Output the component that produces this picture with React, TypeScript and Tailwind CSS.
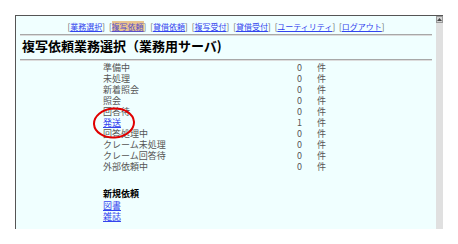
import React from 'react';

const navItems = ['業務選択', '複写依頼', '貸借依頼', '複写受付', '貸借受付', 'ユーティリティ', 'ログアウト'];

const rows = [
  { label: '準備中', count: 0 },
  { label: '未処理', count: 0 },
  { label: '新着照会', count: 0 },
  { label: '照会', count: 0 },
  { label: '回答待', count: 0 },
  { label: '発送', count: 1, link: true },
  { label: '回答処理中', count: 0 },
  { label: 'クレーム未処理', count: 0 },
  { label: 'クレーム回答待', count: 0 },
  { label: '外部依頼中', count: 0 },
];

export default function App() {
  return (
    <div
      className="w-[458px] h-[244px] bg-white pt-[15px] pl-[15px]"
      style={{ fontFamily: '"Noto Sans CJK JP", "Noto Sans", sans-serif' }}
    >
      <div className="relative flex w-[428px] h-[214px] border-l border-t border-[#555]">
        <div className="flex-1 bg-[#f0ffff]">
          {/* nav */}
          <div className="flex justify-center gap-[4px] pt-[5px] text-[8px] leading-[11px]">
            {navItems.map((item, i) => (
              <span key={item} className="text-[#666]">
                [
                <span
                  className={
                    i === 1
                      ? 'bg-[#e9c48f] text-[#5a50c8] underline'
                      : 'text-[#3344ee] underline'
                  }
                >
                  {item}
                </span>
                ]
              </span>
            ))}
          </div>
          <div className="mx-[4px] mt-[2px] h-[2px] border-t border-[#a8a8a8] border-b border-b-[#dcdcdc]" />
          <h1 className="pl-[6px] text-[13px] leading-[20px] font-bold text-black">
            複写依頼業務選択（業務用サーバ)
          </h1>
          <div className="mx-[4px] mt-[3px] h-[2px] border-t border-[#a8a8a8] border-b border-b-[#dcdcdc]" />

          <div className="mt-[1px] pl-[87px] text-[9px] leading-[11px] text-[#555]">
            {rows.map((r) => (
              <div key={r.label} className="flex">
                <span className="w-[194px]">
                  {r.link ? <span className="text-[#3344ee] underline">{r.label}</span> : r.label}
                </span>
                <span className="w-[20px]">{r.count}</span>
                <span>件</span>
              </div>
            ))}
          </div>

          <div className="mt-[16px] pl-[87px] text-[9px] leading-[11.5px]">
            <div className="font-bold text-black">新規依頼</div>
            <div className="text-[#3344ee] underline">図書</div>
            <div className="text-[#3344ee] underline">雑誌</div>
          </div>
        </div>

        {/* scrollbar */}
        <div className="w-[7px] bg-[#e0e0e0] flex flex-col">
          <div className="h-[7px] bg-[#d4d4d4] border border-[#999] flex items-center justify-center">
            <svg width="5" height="3" viewBox="0 0 5 3">
              <path d="M2.5 0 L5 3 L0 3 Z" fill="#444" />
            </svg>
          </div>
        </div>

        {/* annotation */}
        <svg
          className="absolute left-[75px] top-[91px]"
          width="46"
          height="34"
          viewBox="0 0 46 34"
        >
          <ellipse cx="23" cy="16" rx="20" ry="14.5" fill="none" stroke="#e00000" strokeWidth="2" transform="rotate(-4 23 16)" />
        </svg>
      </div>
    </div>
  );
}
